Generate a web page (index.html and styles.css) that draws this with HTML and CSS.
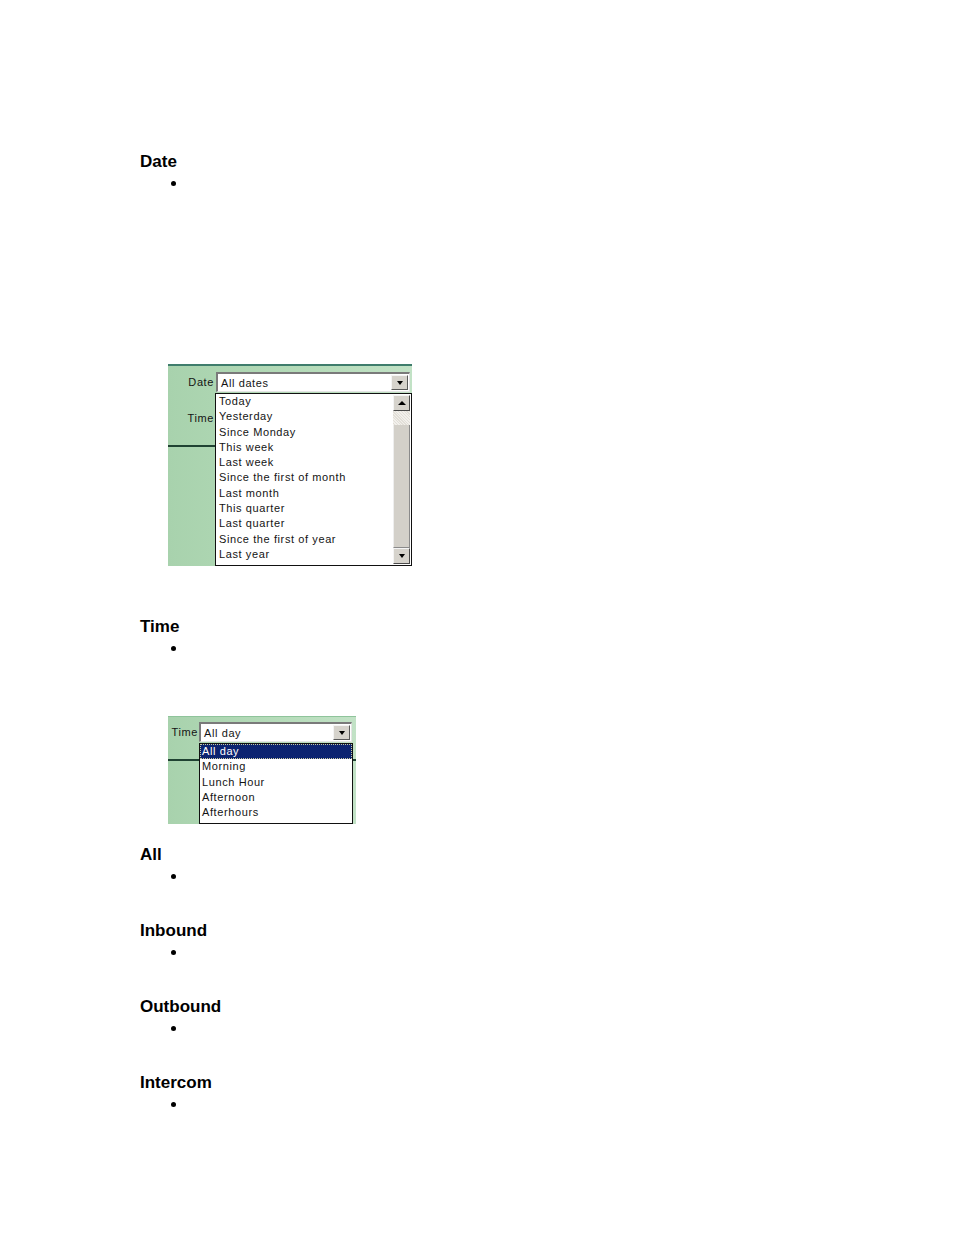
FILE: index.html
```html
<!DOCTYPE html>
<html>
<head>
<meta charset="utf-8">
<link rel="stylesheet" href="styles.css">
</head>
<body>
<div class="doc">
  <h2 class="sec">Date</h2>
  <ul class="pts"><li>&nbsp;</li></ul>

  <div class="shot shot-date">
    <div class="frow">
      <span class="flabel lab-date">Date</span>
      <div class="combo combo-date">
        <span class="combo-text">All dates</span>
        <span class="combo-btn"><span class="arrow-down"></span></span>
      </div>
    </div>
    <div class="frow frow-time">
      <span class="flabel lab-date">Time</span>
    </div>
    <div class="divider div-date"></div>

    <div class="droplist drop-date">
      <div class="items">
        <div class="item">Today</div>
        <div class="item">Yesterday</div>
        <div class="item">Since Monday</div>
        <div class="item">This week</div>
        <div class="item">Last week</div>
        <div class="item">Since the first of month</div>
        <div class="item">Last month</div>
        <div class="item">This quarter</div>
        <div class="item">Last quarter</div>
        <div class="item">Since the first of year</div>
        <div class="item">Last year</div>
      </div>
      <div class="sbar">
        <span class="sbtn"><span class="arrow-up"></span></span>
        <span class="strack"></span>
        <span class="sthumb"></span>
        <span class="sbtn"><span class="arrow-down"></span></span>
      </div>
    </div>
  </div>

  <h2 class="sec sec-time">Time</h2>
  <ul class="pts"><li>&nbsp;</li></ul>

  <div class="shot shot-time">
    <div class="frow frow-t">
      <span class="flabel lab-time">Time</span>
      <div class="combo combo-time">
        <span class="combo-text">All day</span>
        <span class="combo-btn"><span class="arrow-down"></span></span>
      </div>
    </div>
    <div class="divider div-time"></div>
    <div class="droplist drop-time">
      <div class="items">
        <div class="item sel">All day</div>
        <div class="item">Morning</div>
        <div class="item">Lunch Hour</div>
        <div class="item">Afternoon</div>
        <div class="item">Afterhours</div>
      </div>
    </div>
  </div>

  <h2 class="sec sec-all">All</h2>
  <ul class="pts"><li>&nbsp;</li></ul>

  <h2 class="sec sec-next">Inbound</h2>
  <ul class="pts"><li>&nbsp;</li></ul>

  <h2 class="sec sec-next">Outbound</h2>
  <ul class="pts"><li>&nbsp;</li></ul>

  <h2 class="sec sec-next">Intercom</h2>
  <ul class="pts"><li>&nbsp;</li></ul>
</div>
</body>
</html>
```

FILE: styles.css
```css
html, body {
  margin: 0;
  padding: 0;
  background: #ffffff;
}

.doc {
  padding: 152px 0 0 140px;
  font-family: "Liberation Sans", Arial, sans-serif;
  color: #000;
}

.sec {
  margin: 0;
  font-size: 17px;
  line-height: 20px;
  font-weight: bold;
}

.sec-time { margin-top: 51px; }
.sec-all { margin-top: 21px; }
.sec-next { margin-top: 36px; }

.pts {
  margin: 0;
  padding-left: 48px;
  font-size: 18px;
  line-height: 20px;
}

/* screenshots */
.shot {
  position: relative;
  margin-left: 28px;
  background: linear-gradient(to right, #a8d2ad 0%, #b6dcba 60%, #c2e2c6 100%);
  font-family: "Liberation Sans", Arial, sans-serif;
  font-size: 11px;
  letter-spacing: 0.6px;
  color: #141414;
  box-sizing: border-box;
}

.shot-date {
  margin-top: 172px;
  width: 244px;
  height: 202px;
  border-top: 2px solid #3f7d6c;
  padding-top: 6px;
}

.shot-time {
  margin-top: 59px;
  width: 188px;
  height: 108px;
  border-top: 1px solid #8fc49b;
  padding-top: 5px;
}

.frow {
  display: flex;
  align-items: center;
  height: 20px;
}

.flabel {
  text-align: right;
  box-sizing: border-box;
  padding-right: 2px;
}

.lab-date { width: 48px; }
.lab-time { width: 31px; padding-right: 1px; }

.frow-time { margin-top: 16px; }

.combo {
  height: 20px;
  box-sizing: border-box;
  background: #fff;
  border-top: 2px solid #7a7a7a;
  border-left: 2px solid #7a7a7a;
  border-bottom: 1px solid #e4e4e4;
  border-right: 1px solid #e4e4e4;
  display: flex;
  align-items: center;
  justify-content: space-between;
  padding-left: 3px;
  padding-right: 1px;
}

.combo-date { width: 194px; }
.combo-time { width: 153px; }

.combo-btn {
  width: 17px;
  height: 15px;
  box-sizing: border-box;
  background: #d6d3cc;
  border-top: 1px solid #f4f4f4;
  border-left: 1px solid #f4f4f4;
  border-right: 1px solid #5a5a5a;
  border-bottom: 1px solid #5a5a5a;
  display: flex;
  align-items: center;
  justify-content: center;
}

.arrow-down {
  width: 0;
  height: 0;
  border-left: 3.5px solid transparent;
  border-right: 3.5px solid transparent;
  border-top: 4px solid #000;
}

.arrow-up {
  width: 0;
  height: 0;
  border-left: 4px solid transparent;
  border-right: 4px solid transparent;
  border-bottom: 4px solid #000;
}

.divider {
  height: 2px;
  background: #1f4232;
}

.div-date { margin-top: 17px; }
.div-time { margin-top: 17px; }

.droplist {
  position: absolute;
  background: #fff;
  border: 1px solid #111;
  box-sizing: border-box;
  display: flex;
}

.drop-date {
  left: 47px;
  top: 27px;
  width: 197px;
  height: 173px;
}

.drop-time {
  left: 31px;
  top: 26px;
  width: 154px;
  height: 81px;
}

.items {
  flex: 1;
  min-width: 0;
}

.item {
  line-height: 15.3px;
  height: 15.3px;
  padding-left: 3px;
  white-space: nowrap;
}

.drop-time .item { padding-left: 2px; }

.item.sel {
  background: #0c2470;
  color: #fff;
  outline: 1px dotted #c9c9a0;
  outline-offset: -1px;
}

.sbar {
  width: 17px;
  margin: 1px 1px 1px 0;
  display: flex;
  flex-direction: column;
}

.sbtn {
  height: 16px;
  box-sizing: border-box;
  background: #d6d3cc;
  border-top: 1px solid #f4f4f4;
  border-left: 1px solid #f4f4f4;
  border-right: 1px solid #4a4a4a;
  border-bottom: 1px solid #4a4a4a;
  display: flex;
  align-items: center;
  justify-content: center;
}

.strack {
  height: 14px;
  background: repeating-linear-gradient(45deg, #f2f0ec 0 1px, #e2dfd8 1px 2px);
}

.sthumb {
  flex: 1;
  background: #d3d0c9;
  border-left: 1px solid #eeeeee;
  border-right: 1px solid #8a8a8a;
  border-bottom: 1px solid #8a8a8a;
}
```
